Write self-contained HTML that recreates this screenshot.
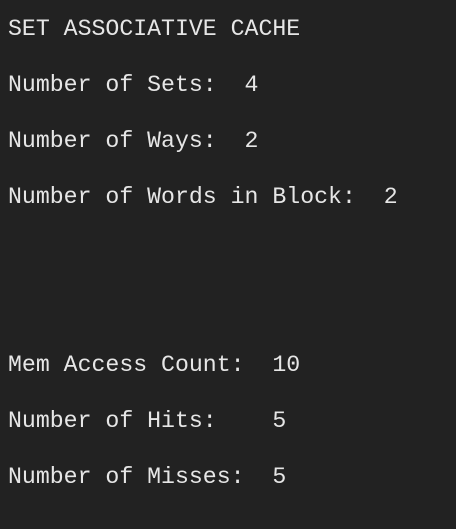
<!DOCTYPE html>
<html><head><meta charset="utf-8"><style>
html,body{margin:0;padding:0;background:#222222;width:456px;height:529px;overflow:hidden}
pre{margin:0;padding:1px 0 0 8px;font-family:"Liberation Mono",monospace;font-size:23.2px;line-height:56px;color:#e6e6e6;white-space:pre}
</style></head><body><pre>SET ASSOCIATIVE CACHE
Number of Sets:  4
Number of Ways:  2
Number of Words in Block:  2


Mem Access Count:  10
Number of Hits:    5
Number of Misses:  5</pre></body></html>
